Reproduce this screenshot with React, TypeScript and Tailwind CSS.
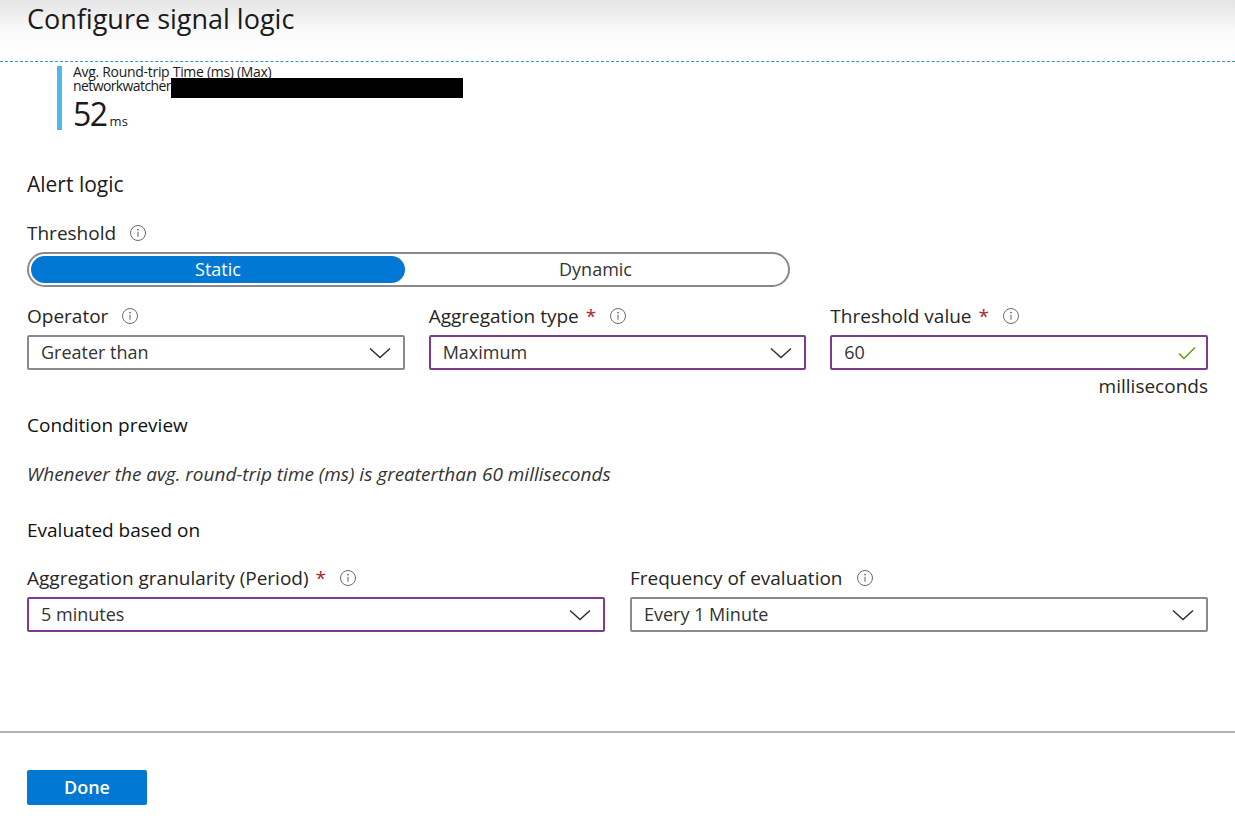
import React from "react";

const font = { fontFamily: '"Open Sans", "Noto Sans", Arial, sans-serif' };

function Info() {
  return (
    <svg width="18" height="18" viewBox="0 0 18 18" className="shrink-0">
      <circle cx="9" cy="9" r="7.5" fill="none" stroke="#6b6b6b" strokeWidth="1" />
      <circle cx="9" cy="5.6" r="0.9" fill="#6b6b6b" />
      <path d="M9 7.8 V12.8" stroke="#6b6b6b" strokeWidth="1.1" />
    </svg>
  );
}

function Chevron() {
  return (
    <svg width="22" height="12" viewBox="0 0 22 12" className="shrink-0">
      <path d="M1 1.5 L11 10.5 L21 1.5" fill="none" stroke="#2b2b2b" strokeWidth="1.4" />
    </svg>
  );
}

function Check() {
  return (
    <svg width="18" height="14" viewBox="0 0 18 14" className="shrink-0">
      <path d="M1 7.5 L6 12.5 L17 1.5" fill="none" stroke="#57a300" strokeWidth="1.4" />
    </svg>
  );
}

function Label({ text, required }: { text: string; required?: boolean }) {
  return (
    <div className="flex items-center h-[24px] text-[19px] leading-[24px] text-[#262626]">
      <span>{text}</span>
      {required && <span className="ml-[7px] text-[#a4262c]">*</span>}
      <span className="ml-[13px] flex items-center">
        <Info />
      </span>
    </div>
  );
}

function Select({ value, purple }: { value: string; purple?: boolean }) {
  return (
    <div
      className={
        "mt-[7px] h-[35px] flex items-center justify-between pl-[12px] pr-[12px] rounded-[2px] border-2 " +
        (purple ? "border-[#7f3b8f]" : "border-[#8a8a8a]")
      }
    >
      <span className="text-[18px] text-[#333333]">{value}</span>
      <Chevron />
    </div>
  );
}

export default function App() {
  return (
    <div className="w-[1235px] h-[823px] bg-white overflow-hidden flex flex-col" style={font}>
      <div className="h-[61px] shrink-0 bg-gradient-to-b from-[#e4e4e4] via-[#fafafa] to-white px-[27px] pt-[3px]">
        <div className="text-[27px] leading-[32px] text-[#1a1a1a]">Configure signal logic</div>
      </div>
      <div className="border-t border-dashed border-[#2f9fb0]" />

      <div className="flex h-[64px] shrink-0 pl-[57px] mt-[4px]">
        <div className="w-[5px] h-[64px] bg-[#4db8ec]" />
        <div className="ml-[11px] h-[64px] flex flex-col text-[#1a1a1a]">
          <div className="text-[14px] leading-[13px] tracking-[-0.3px] -mt-[1px]">Avg. Round-trip Time (ms) (Max)</div>
          <div className="flex items-start h-[13px] mt-[1px] text-[14px] leading-[13px] tracking-[-0.6px]">
            <span>networkwatcher</span>
            <div className="w-[292px] h-[20px] bg-black -mt-[1px]" />
          </div>
          <div className="flex items-baseline h-[30px] mt-[7px] leading-[30px]">
            <span className="text-[32px] leading-[30px] tracking-[-1.5px]">52</span>
            <span className="ml-[3px] text-[13px] leading-[14px]">ms</span>
          </div>
        </div>
      </div>

      <div className="px-[27px] flex flex-col">
        <div className="mt-[40px] text-[21px] leading-[28px] text-[#1a1a1a]">Alert logic</div>
        <div className="mt-[23px]">
          <Label text="Threshold" />
        </div>
        <div className="mt-[7px] w-[763px] h-[35px] rounded-full border-2 border-[#8a8a8a] p-[2px] flex">
          <div className="w-[374px] h-full rounded-full bg-[#0078d4] flex items-center justify-center text-white text-[18px]">
            Static
          </div>
          <div className="flex-1 flex items-center justify-center text-[#333333] text-[18px]">Dynamic</div>
        </div>

        <div className="mt-[17px] grid grid-cols-3 gap-x-[24px]">
          <div>
            <Label text="Operator" />
            <Select value="Greater than" />
          </div>
          <div>
            <Label text="Aggregation type" required />
            <Select value="Maximum" purple />
          </div>
          <div>
            <Label text="Threshold value" required />
            <div className="mt-[7px] h-[35px] flex items-center justify-between pl-[12px] pr-[10px] rounded-[2px] border-2 border-[#7f3b8f]">
              <span className="text-[18px] text-[#333333]">60</span>
              <Check />
            </div>
            <div className="mt-[4px] h-[24px] leading-[24px] text-right text-[19px] text-[#262626]">milliseconds</div>
          </div>
        </div>

        <div className="mt-[15px] h-[24px] leading-[24px] text-[19px] text-[#111111]">Condition preview</div>
        <div className="mt-[25px] h-[24px] leading-[24px] text-[19px] italic text-[#333333]">
          Whenever the avg. round-trip time (ms) is greaterthan 60 milliseconds
        </div>
        <div className="mt-[32px] h-[24px] leading-[24px] text-[19px] text-[#111111]">Evaluated based on</div>

        <div className="mt-[24px] grid grid-cols-2 gap-x-[25px]">
          <div>
            <Label text="Aggregation granularity (Period)" required />
            <Select value="5 minutes" purple />
          </div>
          <div>
            <Label text="Frequency of evaluation" />
            <Select value="Every 1 Minute" />
          </div>
        </div>
      </div>

      <div className="mt-[99px] border-t-2 border-[#b4b4b4]" />
      <div className="px-[27px] mt-[37px]">
        <button className="w-[120px] h-[35px] rounded-[2px] bg-[#0078d4] text-white text-[18px] font-semibold">
          Done
        </button>
      </div>
    </div>
  );
}
